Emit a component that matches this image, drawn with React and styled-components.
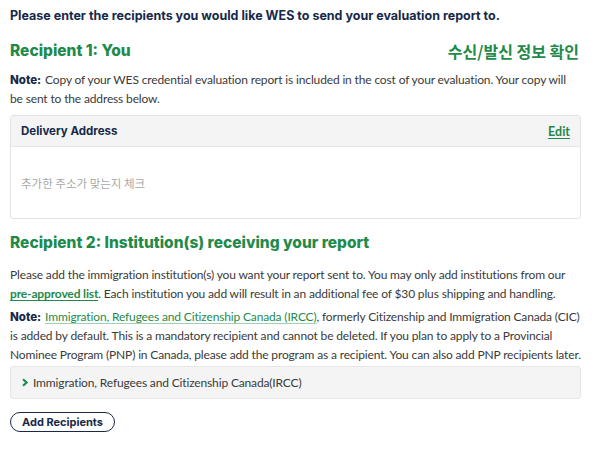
import styled, { createGlobalStyle } from "styled-components";

const Navy = "#16294a";
const Green = "#1f8a4a";

const GlobalStyle = createGlobalStyle`
  body {
    margin: 0;
    background: #ffffff;
    font-family: "Lato", "Noto Sans", "Noto Sans CJK KR", sans-serif;
    color: #333333;
  }
`;

const Page = styled.div`
  width: 571px;
  padding: 7px 0 0 10px;
`;

const Lead = styled.h1`
  margin: 0;
  font-family: "Inter", "Liberation Sans", sans-serif;
  font-size: 12.5px;
  font-weight: 700;
  line-height: 18px;
  color: ${Navy};
`;

const SectionHead = styled.div`
  display: flex;
  justify-content: space-between;
  align-items: center;
  margin-top: ${(p) => p.$top}px;
`;

const Heading = styled.h2`
  margin: 0;
  font-family: "Inter", "Liberation Sans", sans-serif;
  font-size: 15.5px;
  font-weight: 800;
  line-height: 22px;
  color: ${Green};
`;

const Korean = styled.span`
  margin-right: 2px;
  font-family: "Noto Sans CJK KR", sans-serif;
  font-size: 16px;
  font-weight: 700;
  color: ${Green};
`;

const Para = styled.p`
  margin: ${(p) => p.$top}px 0 0;
  font-size: 12px;
  letter-spacing: -0.15px;
  line-height: 19px;
  color: #3a3a3a;
`;

const Strong = styled.b`
  margin-right: 1px;
  font-family: "Inter", "Liberation Sans", sans-serif;
  font-size: 11.5px;
  line-height: 1;
  letter-spacing: 0;
  font-weight: 800;
  color: ${Navy};
`;

const Link = styled.a`
  color: ${Green};
  font-weight: ${(p) => (p.$bold ? 700 : 400)};
  text-decoration: underline;
  text-decoration-color: ${(p) => (p.$bold ? Green : "#9fd0b0")};
  text-underline-offset: 2px;
`;

const Card = styled.div`
  margin-top: 7px;
  border: 1px solid #e3e3e3;
  border-radius: 3px;
  overflow: hidden;
`;

const CardHeader = styled.div`
  display: flex;
  justify-content: space-between;
  align-items: center;
  height: 30px;
  padding: 0 10px;
  background: #f4f4f4;
  border-bottom: 1px solid #e6e6e6;
`;

const CardTitle = styled.span`
  font-family: "Inter", "Liberation Sans", sans-serif;
  font-size: 11.5px;
  font-weight: 700;
  color: ${Navy};
`;

const EditLink = styled(Link)`
  font-size: 12.5px;
`;

const CardBody = styled.div`
  display: flex;
  align-items: center;
  height: 71px;
  padding: 0 10px;
`;

const Placeholder = styled.span`
  font-family: "Noto Sans CJK KR", sans-serif;
  font-size: 11.5px;
  color: #a8a8a8;
`;

const Accordion = styled.div`
  display: flex;
  align-items: center;
  gap: 4px;
  height: 31px;
  margin-top: 2px;
  padding: 0 10px;
  background: #f4f4f4;
  border: 1px solid #e6e6e6;
  border-radius: 3px;
  font-size: 12px;
  letter-spacing: -0.15px;
  color: #3a3a3a;
`;

const Button = styled.button`
  display: block;
  margin-top: 13px;
  height: 20px;
  padding: 0 11px;
  background: #ffffff;
  border: 1px solid ${Navy};
  border-radius: 10px;
  font-family: "Inter", "Liberation Sans", sans-serif;
  font-size: 11px;
  font-weight: 700;
  color: ${Navy};
`;

function Chevron() {
  return (
    <svg width="8" height="9" viewBox="0 0 8 9">
      <path d="M2 1.2 L5.6 4.5 L2 7.8" fill="none" stroke={Green} strokeWidth="2.2" />
    </svg>
  );
}

export default function App() {
  return (
    <Page>
      <GlobalStyle />
      <Lead>Please enter the recipients you would like WES to send your evaluation report to.</Lead>

      <SectionHead $top={14}>
        <Heading>Recipient 1: You</Heading>
        <Korean>수신/발신 정보 확인</Korean>
      </SectionHead>
      <Para $top={7}>
        <Strong>Note:</Strong> Copy of your WES credential evaluation report is included in the cost of
        your evaluation. Your copy will be sent to the address below.
      </Para>

      <Card>
        <CardHeader>
          <CardTitle>Delivery Address</CardTitle>
          <EditLink $bold href="#">Edit</EditLink>
        </CardHeader>
        <CardBody>
          <Placeholder>추가한 주소가 맞는지 체크</Placeholder>
        </CardBody>
      </Card>

      <SectionHead $top={13}>
        <Heading>Recipient 2: Institution(s) receiving your report</Heading>
      </SectionHead>
      <Para $top={11}>
        Please add the immigration institution(s) you want your report sent to. You may only add
        institutions from our <Link $bold href="#">pre-approved list</Link>. Each institution you add
        will result in an additional fee of $30 plus shipping and handling.
      </Para>
      <Para $top={4}>
        <Strong>Note:</Strong> <Link href="#">Immigration, Refugees and Citizenship Canada (IRCC)</Link>,
        formerly Citizenship and Immigration Canada (CIC) is added by default. This is a mandatory
        recipient and cannot be deleted. If you plan to apply to a Provincial Nominee Program (PNP) in
        Canada, please add the program as a recipient. You can also add PNP recipients later.
      </Para>

      <Accordion>
        <Chevron />
        Immigration, Refugees and Citizenship Canada(IRCC)
      </Accordion>

      <Button>Add Recipients</Button>
    </Page>
  );
}
